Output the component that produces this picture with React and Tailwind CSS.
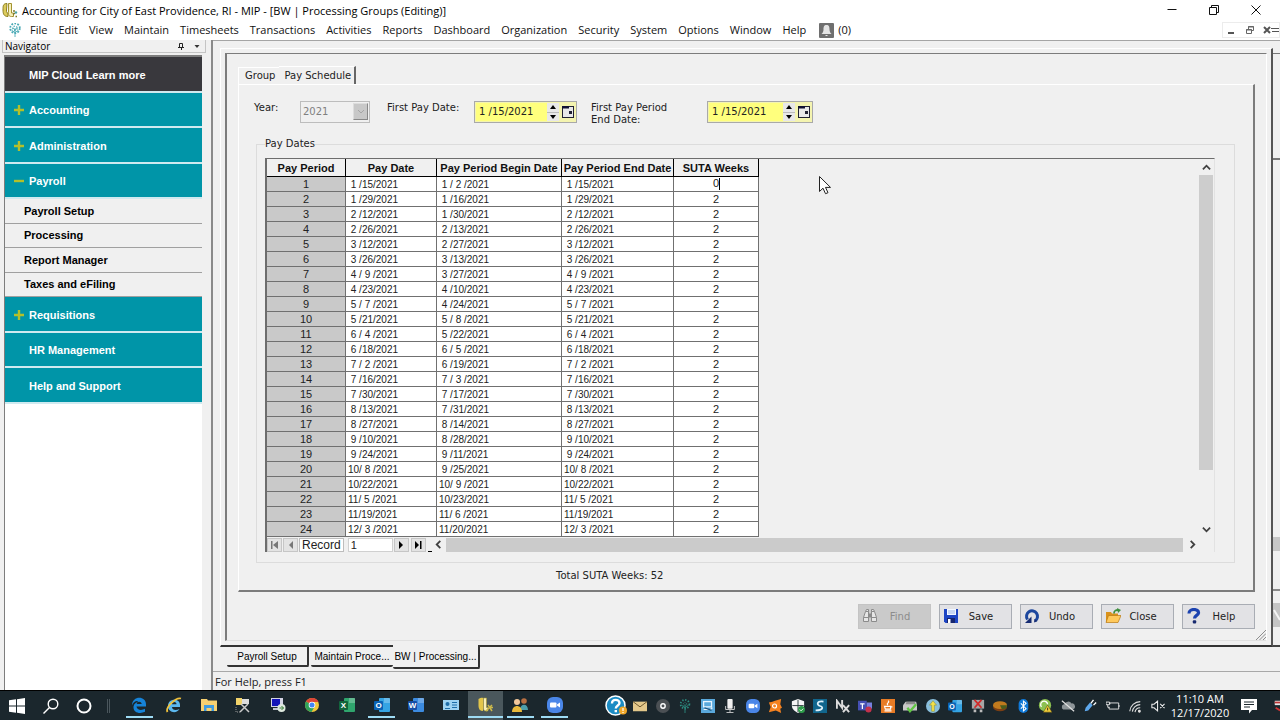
import React, { useState } from "react";

const segoe = "font-['Open_Sans','Noto_Sans',sans-serif]";
const tahoma = "font-['DejaVu_Sans',sans-serif]";
const arial = "font-['Liberation_Sans',Arial,sans-serif]";

const MENU = [
    "File", "Edit", "View", "Maintain", "Timesheets", "Transactions", "Activities", "Reports",
    "Dashboard", "Organization", "Security", "System", "Options", "Window", "Help",
];

const DAY = 24 * 60 * 60 * 1000;
const FIRST_PAY = Date.UTC(2021, 0, 15);

// blank padded the way the masked grid cells show it, e.g. " 1 / 2 /2021"
const pad = (n) => (n < 10 ? ` ${n} ` : `${n}`);
const formatDate = (time) => {
    const d = new Date(time);
    return `${pad(d.getUTCMonth() + 1)}/${pad(d.getUTCDate())}/${d.getUTCFullYear()}`;
};

const rows = Array.from({ length: 24 }, (_, i) => {
    const end = FIRST_PAY + i * 14 * DAY;
    return { period: i + 1, pay: formatDate(end), begin: formatDate(end - 13 * DAY), end: formatDate(end) };
});

/* ---------- shared drawings ---------- */

const MipLogo = ({ className }) => (
    <svg viewBox="0 0 16 16" className={className} fill="none">
        <path d="M5 1.500C1 1.500 1 4 1 8s1 6.500 5 6.500V11c-1.500 0-1.500-1-1.500-3z" fill="#dccb5c" stroke="#8c7f22" />
        <path d="M6.500 1.500h3V11h2v3.500h-2c-3 0-3-2-3-4z" fill="#f6efb8" stroke="#a39331" />
        <path d="M12 8v2M11 12.500l2-1.500M13.500 14.500h1.500" stroke="#7d7a2c" strokeWidth="1.500" />
        <circle cx="14" cy="10.500" r="1.200" fill="#4aa3a8" />
    </svg>
);

const Tree = ({ className, color }) => (
    <svg viewBox="0 0 16 16" className={className} fill="none" stroke={color}>
        <path d="M8 16V6M8 11L4 8M8 11l4-3M8 8L5.500 5M8 8l2.500-3" strokeWidth="1" />
        <circle cx="8" cy="6" r="5.500" strokeWidth="2" strokeDasharray="2 1.500" />
        <circle cx="8" cy="6" r="2.500" strokeWidth="1.500" strokeDasharray="1.500 1.500" />
    </svg>
);

const Chevron = ({ d }) => (
    <svg viewBox="0 0 10 10" className="size-[9px]" fill="none" stroke="#404040" strokeWidth="2">
        <path d={d} />
    </svg>
);

/* ---------- top bars ---------- */

const TitleBar = () => (
    <header className={`${segoe} flex h-5 items-center bg-white pl-0.5 text-[11px] leading-5 text-black`}>
        <MipLogo className="size-4" />
        <h1 className="ml-1 flex-1 pt-0.5 whitespace-nowrap">
            Accounting for City of East Providence, RI - MIP - [BW | Processing Groups (Editing)]
        </h1>
        <div className="flex pr-[3px]">
            <button aria-label="Minimize" className="flex h-5 w-[42px] items-center justify-center">
                <svg viewBox="0 0 12 12" className="size-3" stroke="#111" fill="none"><path d="M1.500 5.500h9" /></svg>
            </button>
            <button aria-label="Restore" className="flex h-5 w-[42px] items-center justify-center">
                <svg viewBox="0 0 12 12" className="size-3" stroke="#111" fill="none">
                    <path d="M1.500 3.500h7v7h-7zM3.500 3.500v-2h7v7h-2" />
                </svg>
            </button>
            <button aria-label="Close window" className="flex h-5 w-[42px] items-center justify-center">
                <svg viewBox="0 0 12 12" className="size-3" stroke="#111" fill="none"><path d="M1.500 1.500l9 9M10.500 1.500l-9 9" /></svg>
            </button>
        </div>
    </header>
);

const MenuBar = () => (
    <nav className={`${segoe} flex h-5 items-center bg-white pl-2 text-[11px] leading-5 text-[#111]`}>
        <Tree className="mr-2 size-3.5" color="#4aa9b5" />
        <div className="flex flex-1 items-center gap-[11px]">
            {MENU.map((item) => (
                <button key={item}>{item}</button>
            ))}
            <button className="ml-0.5 flex items-center gap-1">
                <svg viewBox="0 0 15 15" className="size-[15px]">
                    <rect width="15" height="15" rx="1" fill="#6f6f6f" />
                    <path d="M7.500 2c-2.600 0-3 2-3 4.500C4.500 9 3.500 10 2.500 11h10c-1-1-2-2-2-4.500S10.100 2 7.500 2z" fill="#e4e4e4" />
                    <path d="M6.500 12h2v1h-2z" fill="#e4e4e4" />
                </svg>
                (0)
            </button>
        </div>
        <div className="flex h-4 items-center gap-2 border border-[#ececec] pl-1">
            <svg viewBox="0 0 10 10" className="size-2.5" stroke="#555" fill="none" strokeWidth="2"><path d="M1 8h6" /></svg>
            <svg viewBox="0 0 10 10" className="size-2.5" stroke="#666" fill="none">
                <path d="M1.500 4.500h5v4h-5zM3.500 4V1.500h5v4H7M1 5h6M3 2h6" />
            </svg>
            <svg viewBox="0 0 16 10" className="h-2.5 w-4" stroke="#555" fill="none">
                <path d="M1 2l6 6M7 2L1 8" strokeWidth="2" />
                <path d="M8 3.500h8M9 6.500h7" />
            </svg>
        </div>
    </nav>
);

/* ---------- navigator ---------- */

const NavButton = ({ label, sign, dark }) => (
    <button
        className={`flex flex-1 items-center border-b-2 border-[#cfeaf0] pt-0.5 pl-[9px] text-left font-bold text-white ${
            dark ? "bg-[#39383d]" : "bg-[#0095a8]"
        }`}
    >
        <span className="flex w-[15px] items-center">
            {sign && (
                <svg viewBox="0 0 10 10" className="size-2.5" fill="none" stroke="#b4c02a" strokeWidth="2.400">
                    <path d={sign === "+" ? "M0 5h10M5 0v10" : "M0 5h10"} />
                </svg>
            )}
        </span>
        {label}
    </button>
);

const Navigator = () => (
    <aside className="flex w-[213px] shrink-0 flex-col border-r-2 border-[#8a8a8a] bg-[#f0f0f0] pl-[2px] pr-[5px]">
        <div className={`${segoe} flex h-[13px] items-center border border-t-0 border-[#c4c4c4] text-[10px] leading-3 text-black`}>
            <h2 className="flex-1 pl-0.5">Navigator</h2>
            <svg viewBox="0 0 8 8" className="mr-2 size-2" stroke="#222" fill="none"><path d="M2.500 5V1.500h3V5M1 5.500h6M4.500 5v3" /></svg>
            <svg viewBox="0 0 8 8" className="mr-1 size-2" fill="#333"><path d="M1.500 3h5L4 6z" /></svg>
        </div>
        <nav className={`${arial} mt-0.5 mr-1 ml-[2px] flex flex-1 flex-col border-t-2 border-l border-[#7d7d7d] bg-white text-[11px]`}>
            <div className="flex h-[142px] flex-col">
                <NavButton label="MIP Cloud Learn more" dark />
                <NavButton label="Accounting" sign="+" />
                <NavButton label="Administration" sign="+" />
                <NavButton label="Payroll" sign="-" />
            </div>
            <div className="flex h-[98px] flex-col">
                {["Payroll Setup", "Processing", "Report Manager", "Taxes and eFiling"].map((item) => (
                    <button
                        key={item}
                        className="flex flex-1 items-center border-b border-[#a0a0a0] bg-[#f0f0f0] pl-[19px] text-left font-bold text-black"
                    >
                        {item}
                    </button>
                ))}
            </div>
            <div className="flex h-[107px] flex-col">
                <NavButton label="Requisitions" sign="+" />
                <NavButton label="HR Management" />
                <NavButton label="Help and Support" />
            </div>
        </nav>
    </aside>
);

/* ---------- form ---------- */

const DateField = ({ id, width }) => {
    const [value, setValue] = useState("1 /15/2021");
    return (
        <div className={`flex h-[22px] items-center border border-[#a9a9a9] bg-[#f4f4b0] p-px ${width}`}>
            <input
                id={id}
                value={value}
                onChange={(e) => setValue(e.target.value)}
                className="h-full min-w-0 flex-1 bg-[#ffff7d] pl-[3px] pb-0.5 text-[#222] outline-none"
            />
            <div className="mr-0.5 flex h-full w-3 flex-col bg-[#e8e8e8]">
                <button aria-label="Next day" className="flex flex-1 items-center justify-center border-b border-[#bbb]">
                    <svg viewBox="0 0 6 4" className="h-1 w-1.5"><path d="M0 4l3-4 3 4z" /></svg>
                </button>
                <button aria-label="Previous day" className="flex flex-1 items-center justify-center">
                    <svg viewBox="0 0 6 4" className="h-1 w-1.5"><path d="M0 0l3 4 3-4z" /></svg>
                </button>
            </div>
            <button aria-label="Open calendar">
                <svg viewBox="0 0 14 16" className="h-4 w-3.5">
                    <rect x="1.500" y="2.500" width="11" height="11" fill="#e9e9e9" stroke="#223" />
                    <path d="M1 2h7v2.500H1z" fill="#113" />
                    <path d="M8 7h3v3H8z" fill="#223" />
                </svg>
            </button>
        </div>
    );
};

const cell = "border-r border-b border-[#707070] bg-white p-0";
const dateCell = "border-r border-b border-[#707070] bg-white p-0 pt-px pl-0.5 leading-[13px] whitespace-pre";

const PayTable = () => {
    const [weeks, setWeeks] = useState("0");
    return (
        <table className={`${arial} w-[492px] table-fixed border-separate border-spacing-0 text-[10px] leading-[14px] text-[#222]`}>
            <colgroup>
                <col className="w-[79px]" />
                <col className="w-[91px]" />
                <col className="w-[125px]" />
                <col className="w-[112px]" />
                <col className="w-[85px]" />
            </colgroup>
            <thead>
                <tr className="h-[18px] text-[11px] text-[#111]">
                    {["Pay Period", "Pay Date", "Pay Period Begin Date", "Pay Period End Date", "SUTA Weeks"].map((h) => (
                        <th key={h} className="border-r border-b border-black bg-[#f0f0f0] p-0 whitespace-nowrap">{h}</th>
                    ))}
                </tr>
            </thead>
            <tbody>
                {rows.map((row) => (
                    <tr key={row.period} className="h-[15px]">
                        <td className="border-r border-b border-[#707070] bg-[#c9c9c9] p-0 text-center text-[11px]">{row.period}</td>
                        <td className={dateCell}>{row.pay}</td>
                        <td className={dateCell}>{row.begin}</td>
                        <td className={dateCell}>{row.end}</td>
                        <td className={`${cell} text-center text-[11px]`}>
                            {row.period === 1 ? (
                                <span className="flex">
                                    <input
                                        aria-label="SUTA weeks for period 1"
                                        value={weeks}
                                        onChange={(e) => setWeeks(e.target.value)}
                                        className="h-3.5 w-[45px] pb-0.5 text-right outline-none"
                                    />
                                    <span className="mt-px h-3 w-px bg-black" />
                                </span>
                            ) : (
                                "2"
                            )}
                        </td>
                    </tr>
                ))}
            </tbody>
        </table>
    );
};

const RecordButton = ({ label, d, color }) => (
    <button aria-label={label} className="flex h-3.5 w-[15px] items-center justify-center border border-[#c6c6c6] bg-[#e3e3e3]">
        <svg viewBox="0 0 8 8" className="size-2" fill={color}><path d={d} /></svg>
    </button>
);

const RecordBar = () => (
    <div className="flex h-[15px] items-center">
        <div className={`${arial} flex items-center gap-px text-[12px] leading-3 text-[#222]`}>
            <RecordButton label="First record" color="#777" d="M0 0h1.500v8H0zM7 0v8L2 4z" />
            <RecordButton label="Previous record" color="#777" d="M6 0v8L2 4z" />
            <label htmlFor="record" className="border border-[#bdbdbd] bg-white px-0.5">Record</label>
            <input id="record" defaultValue="1" className="ml-[3px] h-3.5 w-[45px] border border-[#d0d0d0] bg-white pl-0.5 text-[11px]" />
            <RecordButton label="Next record" color="#000" d="M2 0v8l4-4z" />
            <span className="ml-px flex">
                <RecordButton label="Last record" color="#000" d="M1 0v8l4-4zM6 0h1.500v8H6z" />
            </span>
        </div>
        <span className="mt-auto ml-0.5 h-px w-1 bg-black" />
        <div className="flex h-full flex-1 items-center">
            <button aria-label="Scroll left" className="flex w-3.5 justify-center"><Chevron d="M7 1L3 5l4 4" /></button>
            <div className="h-3.5 flex-1 bg-[#cbcbcb]" />
            <button aria-label="Scroll right" className="flex w-[18px] justify-center"><Chevron d="M3 1l4 4-4 4" /></button>
            <span className="w-[13px]" />
        </div>
    </div>
);

const PayDates = () => (
    <fieldset className="mt-[11px] border border-[#dcdcdc] pr-[19px] pb-2.5 pl-2">
        <legend className="px-0 leading-[14px]">Pay Dates</legend>
        <div className="mt-[7px] border-t border-l-2 border-[#6d6d6d] border-r border-r-[#e2e2e2]">
            <div className="flex">
                <PayTable />
                <div className="flex-1" />
                <div className="flex w-4 flex-col items-center">
                    <button aria-label="Scroll up" className="flex h-4 items-center"><Chevron d="M1 7l4-4 4 4" /></button>
                    <div className="h-[295px] w-3.5 bg-[#cdcdcd]" />
                    <button aria-label="Scroll down" className="mt-auto flex h-4 items-center"><Chevron d="M1 3l4 4 4-4" /></button>
                </div>
            </div>
            <RecordBar />
        </div>
    </fieldset>
);

const ActionButton = ({ label, disabled, children }) => (
    <button
        disabled={disabled}
        className="flex h-[25px] w-[73px] items-center border border-[#a9adb4] bg-[#e2e2e5] pr-2 pl-[3px] text-[#222] disabled:border-[#c4c4c4] disabled:bg-[#cacaca] disabled:text-[#8c8c8c]"
    >
        <svg viewBox="0 0 16 16" className="mb-0.5 size-4 shrink-0" fill="none">{children}</svg>
        <span className="flex-1 text-center">{label}</span>
    </button>
);

const Actions = () => (
    <div className="flex justify-end gap-2 pt-3 pb-[11px]">
        <ActionButton label="Find" disabled>
            <g stroke="#8b8b8b" fill="#e6e6e6">
                <path d="M3.500 3.500l1-2h2v3M12.500 3.500l-1-2h-2v3" />
                <path d="M1.500 9.500l2-6h3v10h-5zM14.500 9.500l-2-6h-3v10h5z" />
                <path d="M6.500 6h3v3h-3z" fill="#8b8b8b" />
                <path d="M1.500 9.500h5M9.500 9.500h5" />
            </g>
        </ActionButton>
        <ActionButton label="Save">
            <path d="M1 1h14v14H2.500L1 13.500z" fill="#1d45c4" />
            <path d="M4 1h9v6H4z" fill="#f2f7ff" />
            <path d="M5 3h7M5 5h7" stroke="#9db8e8" />
            <path d="M4 10h8v5H4z" fill="#16256f" />
            <path d="M5 11h2.500v4H5z" fill="#fff" />
        </ActionButton>
        <ActionButton label="Undo">
            <path d="M3.500 11.500A5.500 5.500 0 1 1 11 13" stroke="#1c479e" strokeWidth="3" />
            <path d="M7.500 8.500V15H1z" fill="#162c73" />
            <path d="M10 14.500l3.500-1.500-3-2z" fill="#162c73" />
        </ActionButton>
        <ActionButton label="Close">
            <path d="M1 4h5l1 1.500h6V14H1z" fill="#d9921c" />
            <path d="M3.500 7.500H16L13 14.500H1z" fill="#ffc95c" stroke="#b97812" strokeWidth=".7" />
            <path d="M9 5.500c0-3 2-3.500 4-3.500" stroke="#3f8f3f" strokeWidth="1.800" />
            <path d="M12 0l4 2-3 3z" fill="#3f8f3f" />
        </ActionButton>
        <ActionButton label="Help">
            <path d="M3 5.500C3 0 13 .5 12.500 5c-.3 2.500-4 2.500-4 5.500" stroke="#1c43b0" strokeWidth="3.200" />
            <rect x="6.800" y="12.200" width="3.400" height="3.400" rx="1" fill="#17296f" />
        </ActionButton>
    </div>
);

const Pointer = () => (
    <svg viewBox="0 0 12 19" className="pointer-events-none absolute top-[122px] left-[592px] h-[19px] w-3">
        <path d="M.5.5v15l3.500-3.300 2.500 5.500 2.500-1-2.500-5.300h5z" fill="#fff" stroke="#222" />
    </svg>
);

const Dialog = () => (
    <section className={`${tahoma} relative flex flex-1 flex-col border-t border-l-2 border-[#7c7c7c] border-r border-b border-r-white border-b-[#e0e0e0] pt-3 pr-[11px] pl-[11px] text-[10px] text-[#222]`}>
        <div role="tablist" className="flex h-[18px]">
            <button role="tab" className="mt-px border-t border-l border-white pr-1 pb-0.5 pl-1.5">Group</button>
            <button role="tab" aria-selected="true" className="border-t border-r-2 border-t-white border-r-[#666] pr-[3px] pl-[5px]">Pay Schedule</button>
        </div>
        <div className="flex flex-col border-t border-l border-r-2 border-b-2 border-t-white border-l-white border-r-[#7c7c7c] border-b-[#7c7c7c] pt-4 pr-[18px] pl-[15px]">
            <div className="flex items-start">
                <label htmlFor="year" className="w-[46px] pt-px leading-3">Year:</label>
                <div className="relative mr-[17px]">
                    <select id="year" disabled className="h-[22px] w-[70px] appearance-none border border-[#bdbdbd] bg-[#f0f0f0] pb-0.5 pl-0.5 text-[#808080]">
                        <option>2021</option>
                    </select>
                    <span className="pointer-events-none absolute top-0.5 right-0.5 flex h-[17px] w-[15px] items-center justify-center border border-[#888] border-t-[#ddd] border-l-[#ddd] bg-[#c8c8c8]">
                        <svg viewBox="0 0 8 6" className="h-1.5 w-2" fill="none" stroke="#a5a5a5"><path d="M1 1l3 3 3-3" /></svg>
                    </span>
                </div>
                <label htmlFor="first-pay" className="w-[87px] pt-px leading-3">First Pay Date:</label>
                <DateField id="first-pay" width="w-[103px]" />
                <label htmlFor="first-end" className="ml-3.5 w-[116px] pt-px leading-3">
                    First Pay Period
                    <br />
                    End Date:
                </label>
                <DateField id="first-end" width="w-[106px]" />
            </div>
            <div className="pl-0.5"><PayDates /></div>
            <p className="pt-1.5 pb-[7px] pl-[302px] text-left leading-[14px]">Total SUTA Weeks: 52</p>
        </div>
        <Actions />
        <Pointer />
        <svg viewBox="0 0 10 10" className="absolute right-0 bottom-0 size-2.5" stroke="#8d8d8d" fill="none">
            <path d="M0 10L10 0M3.500 10L10 3.500M7 10l3-3" />
        </svg>
    </section>
);

// sliver of the window that lies behind the active one
const BackWindow = () => (
    <div className="flex w-[7px] flex-col border-b-2 border-[#444]">
        <div className="mt-[5px] h-[105px] border-t border-[#777]" />
        <div className="h-[379px] border-t-2 border-[#777]" />
        <div className="h-3.5 bg-[#c6c6c6]" />
        <div className="h-10 border-b-2 border-[#8a8a8a]" />
        <div className="mt-3 flex h-6 items-center bg-[#c4c4c4]">
            <svg viewBox="0 0 7 12" className="h-3 w-[7px]" stroke="#f4f4f4" fill="none"><path d="M1 1l6 10" strokeWidth="2" /></svg>
        </div>
    </div>
);

const WindowTabs = () => (
    <div role="tablist" className={`${arial} flex h-[25px] items-start border-b border-[#a8a8a8] text-[10px] text-black`}>
        <span className="w-3.5" />
        <button role="tab" className="h-5 w-[82px] rounded-b-xs border-r-2 border-b-2 border-[#333]">Payroll Setup</button>
        <button role="tab" className="ml-0.5 h-5 w-[82px] rounded-b-xs border-b-2 border-[#333] whitespace-nowrap">Maintain Proce...</button>
        <button role="tab" aria-selected="true" className="relative -mt-0.5 h-6 w-[87px] rounded-b-xs border-r-2 border-b-2 border-[#333] bg-[#f0f0f0] whitespace-nowrap">
            BW | Processing...
        </button>
    </div>
);

/* ---------- taskbar ---------- */

const Office = ({ letter, back, front }) => (
    <>
        <rect x="5" y="1" width="11" height="14" rx="1" fill={back} />
        <path d="M10 1h6v5h-6z" fill="#fff" opacity=".25" />
        <rect x="0" y="4" width="9" height="9" rx="1" fill={front} />
        <text x="4.500" y="11.200" fontSize="8" fontWeight="bold" fill="#fff" textAnchor="middle" fontFamily="Liberation Sans">{letter}</text>
    </>
);

const ZoomCam = () => (
    <>
        <rect x="0" y="0" width="16" height="16" rx="6" fill="#4a86e8" />
        <rect x="3" y="5.500" width="6.500" height="5" rx="1" fill="#fff" />
        <path d="M10 7.500l3-2v5l-3-2z" fill="#fff" />
    </>
);

const APPS = [
    { name: "Edge", open: true, art: <path d="M1 8.500C1 -1.500 15 -1.500 15 7.500v2H5.500c.5 4 5.500 4 8.500 2.300v3C8 17.500 2 15 2.500 9.500 3 6.500 5.500 5 7.500 5 5 2.500 2 5.500 1 8.500zM5.700 7h5c-.5-3-4.500-3-5 0z" fill="#1683d8" /> },
    { name: "Internet Explorer", art: <><path d="M2 9C2 1 14 1 14 8v2H6c0 3.500 4.500 3.500 7.500 2C11 17 2 16 2 9zM6 7.300h4.500c0-3-4.500-3-4.500 0z" fill="#5cb8ee" /><path d="M1.500 15C-1 10 10 0 15 1.500" stroke="#f0c23c" strokeWidth="1.800" fill="none" /></> },
    { name: "File Explorer", art: <><path d="M0 2h6l1 1.500h9V14H0z" fill="#f7d070" /><path d="M3 8h10v6h-2.500v-3h-5v3H3z" fill="#3f9be0" /></> },
    { name: "Tools", art: <><path d="M1 1h6v7H1z" fill="#f2d36a" /><path d="M7 2h7v5H7z" fill="#ddd" /><path d="M5 15l8-8M6 7l8 8" stroke="#ccc" strokeWidth="1.500" /><path d="M1 10v5h5" stroke="#999" fill="none" strokeDasharray="1 1" /></> },
    { name: "Remote Desktop", art: <><path d="M1 1h12v9H1z" fill="#d5d5e5" /><path d="M2 2h8v7H2z" fill="#1313b8" /><path d="M3 11h8v2H3z" fill="#c4c4d4" /><circle cx="11.500" cy="11" r="4" fill="#dfe9df" /><path d="M9.500 11h4M11.500 9l2 2-2 2" stroke="#3a7f3a" fill="none" /></> },
    { name: "Chrome", art: <><circle cx="8" cy="8" r="7" fill="#f3c73b" /><path d="M8 8L2 4.500A7 7 0 0 1 14.500 5H8z" fill="#dc4437" /><path d="M8 8L2 4.500A7 7 0 0 0 7.500 15L11 9z" fill="#2fa25a" /><circle cx="8" cy="8" r="3.300" fill="#fff" /><circle cx="8" cy="8" r="2.500" fill="#4285f4" /></> },
    { name: "Excel", art: <Office letter="X" back="#2fa56d" front="#12653c" /> },
    { name: "Outlook", open: true, art: <Office letter="O" back="#35a4e4" front="#0a63b5" /> },
    { name: "Word", art: <Office letter="W" back="#3c8be0" front="#174ea6" /> },
    { name: "Contacts", art: <><path d="M0 3h16v10H0z" fill="#9fd3f2" /><circle cx="4.500" cy="7" r="2" fill="#1e6da8" /><path d="M2 11.500h5M9 5.500h5M9 8h5M9 10.500h5" stroke="#1e6da8" /></> },
    { name: "MIP Accounting", open: true, active: true, art: <><path d="M1.500 2c2-1.500 4-1.500 4.500-1v13c-3 0-4.500-2-4.500-5z" fill="#e3c64a" /><path d="M6.500 1h3v9.500h1.500V14H9c-2 0-2.500-1-2.500-3z" fill="#f8efba" stroke="#a39331" strokeWidth=".6" /><path d="M9 14l6-6M11 8l4 6M13 10.500h3" stroke="#cdb94a" strokeWidth="1.500" /></> },
    { name: "Teams People", open: true, art: <><circle cx="12" cy="4" r="2.800" fill="#b86f42" /><path d="M8 13c0-7 8-7 8 0z" fill="#4c9dab" /><circle cx="5" cy="5" r="3" fill="#f2c79a" /><path d="M0 15c0-8 10-8 10 0z" fill="#e9b93b" /></> },
    { name: "Zoom", open: true, art: <ZoomCam /> },
];

const TRAY = [
    { name: "Mail", art: <><path d="M0 3h16v11H0z" fill="#e3c88b" /><path d="M0 3l8 6 8-6" stroke="#5f4a24" fill="none" /></> },
    { name: "Recorder", art: <><circle cx="8" cy="8" r="8" fill="#4b5054" /><circle cx="8" cy="8" r="2.500" stroke="#fff" strokeWidth="1.600" fill="none" /></> },
    { name: "MIP", art: <g stroke="#2c8d80" fill="none"><path d="M8 16V6M8 10L4 7M8 10l4-3" /><circle cx="8" cy="6" r="5" strokeWidth="2" strokeDasharray="1.500 1.800" /><circle cx="8" cy="6" r="2" strokeDasharray="1 1" /></g> },
    { name: "Network Display", art: <><path d="M0 0h16v16H0z" fill="#5aa9dc" /><path d="M3 3h9v6H3zM3 12h8l2-2" stroke="#e8f5ff" fill="none" strokeWidth="1.400" /><path d="M4 10l8 3" stroke="#1c527b" strokeWidth="1.500" /></> },
    { name: "Microphone", art: <><rect x="5" y="0" width="6" height="11" rx="1" fill="#f1f1f1" /><path d="M3 8v4h10V8M8 12v3M4 15.500h8" stroke="#ddd" fill="none" /></> },
    { name: "Zoom", art: <ZoomCam /> },
    { name: "Avast", art: <><path d="M8 2l7-2-1 6 2 4-2 1 1 5-6-3-8 2 2-6-2-5 4-1z" fill="#f58220" /><circle cx="7.500" cy="8" r="2.300" stroke="#fff" strokeWidth="1.300" fill="none" /></> },
    { name: "Defender", art: <><path d="M8 0l7 2.500v5C15 12 11 14.500 8 16 5 14.500 1 12 1 7.500v-5z" fill="#f5f5f5" /><path d="M8 1v14M1.500 7.500h13" stroke="#1f2b30" /><circle cx="12" cy="12" r="4" fill="#2f9e4b" /><path d="M10 12l1.500 1.500L14 11" stroke="#fff" fill="none" /></> },
    { name: "Sync", art: <><path d="M0 0h16v16H0z" fill="#11668d" /><path d="M12 3c-8-1-8 4-4 5s4 5-5 5" stroke="#dff2fb" strokeWidth="2" fill="none" /></> },
    { name: "Nx", art: <path d="M1 11V2l6 8V1M8 7l7 8M15 7l-7 8" stroke="#dcdcdc" strokeWidth="2.200" fill="none" /> },
    { name: "Teams", art: <><path d="M0 2h10v11H0z" fill="#4650b5" /><path d="M10 4h6v7h-6z" fill="#7780df" /><path d="M2.500 5.500h5M5 5.500v6" stroke="#fff" strokeWidth="1.400" /><circle cx="12" cy="12" r="3.500" fill="#c4314b" /></> },
    { name: "Java", art: <><path d="M0 0h16v16H0z" fill="#e77b25" /><path d="M8 2c3 2-3 3 0 5M4 8.500h7v3H5zM11 9h2M4 13.500h8" stroke="#fff" fill="none" strokeWidth="1.300" /></> },
    { name: "Scanner", art: <><path d="M3 3h12l1 4v6H0V7z" fill="#c8c8c8" /><path d="M4 3h10v3H3z" fill="#8a8a8a" /><path d="M5 10l3 4 7-8" stroke="#5fc643" strokeWidth="2.600" fill="none" /></> },
    { name: "Updates", art: <><circle cx="8" cy="8" r="8" fill="#89bfdc" /><path d="M8 2l4 5h-2.500v7h-3V7H4z" fill="#f4e14a" stroke="#8a8a2a" strokeWidth=".6" /></> },
    { name: "Outlook", art: <Office letter="O" back="#35a4e4" front="#0a63b5" /> },
    { name: "Disconnected", art: <><path d="M1 1h14v10H1z" fill="#a7a7a7" /><path d="M3 12v3h3v-3M10 12v3h3v-3" fill="#bbb" /><path d="M4 1l8 9M12 1l-8 9" stroke="#d12a2a" strokeWidth="2" /></> },
    { name: "Disk", art: <><ellipse cx="8" cy="9" rx="8" ry="5" fill="#7b3f14" /><ellipse cx="8" cy="7" rx="8" ry="4.500" fill="#c07a1e" /><path d="M8 7l8 0c0 3-3 4.500-6 4.500z" fill="#4b5d1d" /></> },
    { name: "Bluetooth", art: <><rect x="3" y="0" width="11" height="16" rx="5.500" fill="#1079d8" /><path d="M5.500 5l6 6-3 2.500v-11L11.500 5l-6 6" stroke="#fff" fill="none" strokeWidth="1.200" /></> },
    { name: "Safe Remove", art: <><circle cx="8" cy="7" r="7" fill="#8cc152" /><path d="M4 9a4 4 0 1 1 7-3" stroke="#fff" strokeWidth="1.500" fill="none" /><path d="M11 7l5 8H6z" fill="#f2cf3a" stroke="#5d4a10" strokeWidth=".6" /><path d="M11 10v3" stroke="#222" /></> },
    { name: "Cloud", art: <><path d="M4 12a3 3 0 0 1 0-6 4.500 4.500 0 0 1 8-1 3.500 3.500 0 0 1 1 7z" fill="#8e9599" /><path d="M1 2l14 12" stroke="#e2e2e2" strokeWidth="1.300" /></> },
    { name: "Pen", art: <><path d="M2 14l4-1 5-6-3-3-5 6z" fill="#5ea8ec" /><path d="M9 5l3-4M12 7l3-3" stroke="#fff" strokeWidth="1.600" /></> },
    { name: "Battery", art: <g stroke="#eee" fill="none"><path d="M4.500 6V4.500h10v7H3.500V9M15 7v2" /><path d="M0 3.500h4v3h-4zM2 6.500v3h2" /></g> },
    { name: "Wi-Fi", art: <g stroke="#ddd" fill="none" strokeWidth="1.300"><path d="M2 14A12 12 0 0 1 14 3M5 14.500a9 9 0 0 1 9-8M8 15a6 6 0 0 1 6-5" /><circle cx="13" cy="14" r="1" fill="#ddd" /></g> },
    { name: "Muted", art: <g stroke="#eee" fill="none" strokeWidth="1.200"><path d="M1 6h2.500l4-3.500v11L3.500 10H1zM10.500 5.500l5 5M15.500 5.500l-5 5" /></g> },
];

const Taskbar = () => (
    <footer className="flex h-[30px] items-stretch border-t border-black bg-[#1b272d] text-white">
        <div className="flex w-[101px] items-center">
            <button aria-label="Start" className="flex flex-1 justify-center">
                <svg viewBox="0 0 16 16" className="size-4" fill="#fff"><path d="M0 2.300l7-1v6.200H0zM8 1.200L16 0v7.500H8zM0 8.500h7v6.200l-7-1zM8 8.500h8V16l-8-1.200z" /></svg>
            </button>
            <button aria-label="Search" className="flex flex-1 justify-center">
                <svg viewBox="0 0 16 16" className="size-4" fill="none" stroke="#fff" strokeWidth="1.400"><circle cx="10" cy="6" r="4.800" /><path d="M6.500 9.500L.5 15.500" /></svg>
            </button>
            <button aria-label="Cortana" className="flex flex-1 justify-center">
                <svg viewBox="0 0 16 16" className="size-4" fill="none" stroke="#fff" strokeWidth="2"><circle cx="8" cy="8" r="6.500" /></svg>
            </button>
        </div>
        <span className="mt-2 mr-3 ml-1.5 h-3.5 w-[3px] border-x border-[#4a565c]" />
        <div className="flex w-[450px]">
            {APPS.map((app) => (
                <button
                    key={app.name}
                    aria-label={app.name}
                    className={`flex flex-1 flex-col items-center justify-between pt-1.5 ${app.active ? "bg-[#4a575c]" : ""}`}
                >
                    <svg viewBox="0 0 16 16" className="size-4">{app.art}</svg>
                    {app.open && <span className={`mb-0.5 h-0.5 bg-[#9edcf5] ${app.active ? "w-full" : "w-[27px]"}`} />}
                </button>
            ))}
        </div>
        <div className="ml-auto flex items-center">
            <button aria-label="Get help" className="mr-0.5">
                <svg viewBox="0 0 22 22" className="size-[22px]">
                    <circle cx="10.500" cy="10.500" r="9.500" fill="#1c8cc4" stroke="#fff" strokeWidth="1.500" />
                    <path d="M7 8.500c0-5 7.500-4.500 7.500-.5 0 2.500-3.700 2.500-3.700 5.500M10.800 15v2.200" stroke="#fff" strokeWidth="2.400" fill="none" />
                    <circle cx="18" cy="15.500" r="4" fill="#f0a82a" />
                    <path d="M18 13v3M18 17v1" stroke="#fff" strokeWidth="1.200" />
                </svg>
            </button>
            <div className="flex w-[540px]">
                {TRAY.map((item, i) => (
                    <button key={i} aria-label={item.name} className="flex flex-1 justify-center">
                        <svg viewBox="0 0 16 16" className="size-3.5">{item.art}</svg>
                    </button>
                ))}
            </div>
            <div className={`${segoe} w-[62px] text-center text-[11px] leading-[14px] whitespace-nowrap`}>
                <p>11:10 AM</p>
                <p>12/17/2020</p>
            </div>
            <button aria-label="Notifications" className="ml-2.5">
                <svg viewBox="0 0 16 16" className="size-4"><path d="M0 1h16v11h-5l-3 3.500V12H0z" fill="#fff" /><path d="M3 4h10M3 6.500h10M3 9h6" stroke="#1b272d" /></svg>
            </button>
            <svg viewBox="0 0 8 16" className="ml-4 h-4 w-[7px]"><path d="M2 2h6v5H2z" fill="#e8e8e8" /><path d="M2 4h6" stroke="#b33" strokeWidth="2" /><path d="M3 10l5 3" stroke="#c33" strokeWidth="2" /></svg>
        </div>
    </footer>
);

const App = () => (
    <div className="flex min-h-screen flex-col bg-[#f0f0f0]">
        <TitleBar />
        <MenuBar />
        <div className="flex flex-1">
            <Navigator />
            <main className="flex min-w-0 flex-1 flex-col border-t border-[#a5a5a5]">
                <div className="mt-[7px] flex flex-1">
                    <div className="ml-[7px] flex min-w-0 flex-1 border-t border-l border-r-2 border-b-2 border-t-white border-l-white border-r-[#555] border-b-[#333] pt-1 pr-1 pb-1 pl-1">
                        <Dialog />
                    </div>
                    <BackWindow />
                </div>
                <WindowTabs />
                <p className={`${segoe} h-[18px] pl-0.5 text-[11px] leading-5 text-[#222]`}>For Help, press F1</p>
            </main>
        </div>
        <Taskbar />
    </div>
);

export default App;
